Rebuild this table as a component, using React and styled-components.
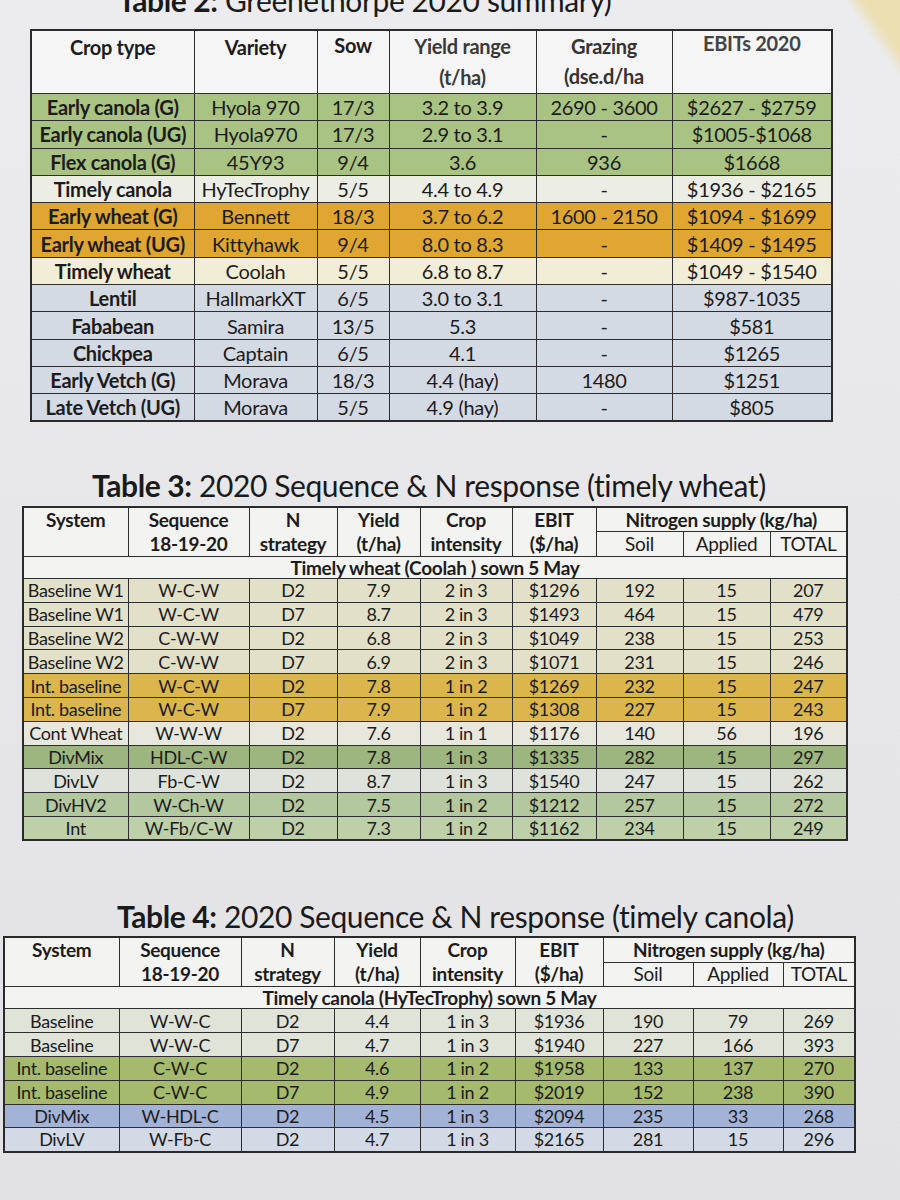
import React from "react";
import styled, { createGlobalStyle } from "styled-components";

const GlobalStyle = createGlobalStyle`
  html, body {
    margin: 0;
    padding: 0;
  }
  body {
    width: 900px;
    height: 1200px;
    overflow: hidden;
    font-family: Lato, "Open Sans", "Liberation Sans", sans-serif;
    color: #1c1c1c;
    background:
      linear-gradient(54deg, transparent calc(100% - 46px), #ecdfb2 calc(100% - 30px)),
      linear-gradient(180deg, #ececee 0%, #e7e7ea 45%, #e2e2e6 100%);
  }
`;

const Page = styled.div`
  display: flex;
  flex-direction: column;
  width: 900px;
`;

const Title = styled.h2`
  margin: ${(p) => p.$margin};
  padding-left: ${(p) => p.$indent}px;
  font-size: 30px;
  font-weight: 400;
  line-height: 34px;
  letter-spacing: -0.4px;
  color: #1a1a1a;
  white-space: nowrap;

  b {
    font-weight: 700;
  }
`;

const Table = styled.table`
  margin-left: ${(p) => p.$left}px;
  width: ${(p) => p.$width}px;
  border-collapse: collapse;
  table-layout: fixed;
  border: 2px solid #2a2a2a;
`;

const Row = styled.tr`
  height: ${(p) => p.$h}px;
  background: ${(p) => p.$bg || "#f4f4f3"};
`;

const Cell = styled.td`
  border: 1.5px solid #2d2d2d;
  padding: 0 1px;
  text-align: center;
  vertical-align: ${(p) => p.$valign || "middle"};
  font-size: ${(p) => p.$size || 18}px;
  font-weight: ${(p) => (p.$bold ? 700 : 400)};
  line-height: ${(p) => p.$lh || 20}px;
  white-space: nowrap;
  overflow: hidden;
  letter-spacing: -0.3px;
`;

const HeadCell = styled(Cell)`
  font-weight: 700;
  color: ${(p) => p.$color || "#1c1c1c"};
`;

// ---------- Table 2 ----------
const t2cols = [163, 123, 72, 147, 136, 160];

const T2 = {
  green: "#a9c382",
  white: "#eceee6",
  orange: "#dfa731",
  cream: "#f2eed6",
  blue: "#d4dae4",
};

const table2 = [
  ["Early canola (G)", "Hyola 970", "17/3", "3.2 to 3.9", "2690 - 3600", "$2627 - $2759", T2.green],
  ["Early canola (UG)", "Hyola970", "17/3", "2.9 to 3.1", "-", "$1005-$1068", T2.green],
  ["Flex canola (G)", "45Y93", "9/4", "3.6", "936", "$1668", T2.green],
  ["Timely canola", "HyTecTrophy", "5/5", "4.4 to 4.9", "-", "$1936 - $2165", T2.white],
  ["Early wheat (G)", "Bennett", "18/3", "3.7 to 6.2", "1600 - 2150", "$1094 - $1699", T2.orange],
  ["Early wheat (UG)", "Kittyhawk", "9/4", "8.0 to 8.3", "-", "$1409 - $1495", T2.orange],
  ["Timely wheat", "Coolah", "5/5", "6.8 to 8.7", "-", "$1049 - $1540", T2.cream],
  ["Lentil", "HallmarkXT", "6/5", "3.0 to 3.1", "-", "$987-1035", T2.blue],
  ["Fababean", "Samira", "13/5", "5.3", "-", "$581", T2.blue],
  ["Chickpea", "Captain", "6/5", "4.1", "-", "$1265", T2.blue],
  ["Early Vetch (G)", "Morava", "18/3", "4.4 (hay)", "1480", "$1251", T2.blue],
  ["Late Vetch (UG)", "Morava", "5/5", "4.9 (hay)", "-", "$805", T2.blue],
];

function SummaryTable() {
  return (
    <Table $left={30} $width={803}>
      <colgroup>
        {t2cols.map((w, i) => (
          <col key={i} style={{ width: w }} />
        ))}
      </colgroup>
      <tbody>
        <Row $h={59} $bg="#f5f5f5">
          <HeadCell $valign="top" $lh={32} $size={20}>Crop type</HeadCell>
          <HeadCell $valign="top" $lh={32} $size={20}>Variety</HeadCell>
          <HeadCell $valign="top" $lh={28} $size={20}>Sow</HeadCell>
          <HeadCell $valign="top" $lh={31} $size={20} $color="#3a3a3a">
            Yield range
            <br />
            (t/ha)
          </HeadCell>
          <HeadCell $valign="top" $lh={30} $size={20} $color="#333">
            Grazing
            <br />
            (dse.d/ha
          </HeadCell>
          <HeadCell $valign="top" $lh={24} $size={20} $color="#444">EBITs 2020</HeadCell>
        </Row>
        {table2.map((r) => (
          <Row key={r[0]} $h={27.3} $bg={r[6]}>
            <Cell $bold $size={20}>{r[0]}</Cell>
            {r.slice(1, 6).map((v, i) => (
              <Cell key={i} $size={20}>{v}</Cell>
            ))}
          </Row>
        ))}
      </tbody>
    </Table>
  );
}

// ---------- Tables 3 & 4 ----------
function SequenceTable({ left, width, cols, subtitle, rows, headH, rowH }) {
  return (
    <Table $left={left} $width={width}>
      <colgroup>
        {cols.map((w, i) => (
          <col key={i} style={{ width: w }} />
        ))}
      </colgroup>
      <tbody>
        <Row $h={headH} $bg="#f3f3f2">
          <HeadCell rowSpan={2} $valign="top" $lh={24} $size={19}>System</HeadCell>
          <HeadCell rowSpan={2} $valign="top" $lh={24} $size={19}>
            Sequence
            <br />
            18-19-20
          </HeadCell>
          <HeadCell rowSpan={2} $valign="top" $lh={24} $size={19}>
            N
            <br />
            strategy
          </HeadCell>
          <HeadCell rowSpan={2} $valign="top" $lh={24} $size={19}>
            Yield
            <br />
            (t/ha)
          </HeadCell>
          <HeadCell rowSpan={2} $valign="top" $lh={24} $size={19}>
            Crop
            <br />
            intensity
          </HeadCell>
          <HeadCell rowSpan={2} $valign="top" $lh={24} $size={19}>
            EBIT
            <br />
            ($/ha)
          </HeadCell>
          <HeadCell colSpan={3} $size={19}>Nitrogen supply (kg/ha)</HeadCell>
        </Row>
        <Row $h={headH} $bg="#f3f3f2">
          <Cell $size={19}>Soil</Cell>
          <Cell $size={19}>Applied</Cell>
          <Cell $size={19}>TOTAL</Cell>
        </Row>
        <Row $h={22} $bg="#f3f3f2">
          <HeadCell colSpan={9} $size={19}>{subtitle}</HeadCell>
        </Row>
        {rows.map((r, idx) => (
          <Row key={idx} $h={rowH} $bg={r[9]}>
            {r.slice(0, 9).map((v, i) => (
              <Cell key={i}>{v}</Cell>
            ))}
          </Row>
        ))}
      </tbody>
    </Table>
  );
}

const T3 = {
  base: "#e2e0c9",
  gold: "#dab64c",
  cont: "#e7e7de",
  green: "#9db67f",
  pale: "#dde3da",
  mid: "#b3c89e",
  light: "#bdd0a9",
};

const table3 = [
  ["Baseline W1", "W-C-W", "D2", "7.9", "2 in 3", "$1296", "192", "15", "207", T3.base],
  ["Baseline W1", "W-C-W", "D7", "8.7", "2 in 3", "$1493", "464", "15", "479", T3.base],
  ["Baseline W2", "C-W-W", "D2", "6.8", "2 in 3", "$1049", "238", "15", "253", T3.base],
  ["Baseline W2", "C-W-W", "D7", "6.9", "2 in 3", "$1071", "231", "15", "246", T3.base],
  ["Int. baseline", "W-C-W", "D2", "7.8", "1 in 2", "$1269", "232", "15", "247", T3.gold],
  ["Int. baseline", "W-C-W", "D7", "7.9", "1 in 2", "$1308", "227", "15", "243", T3.gold],
  ["Cont Wheat", "W-W-W", "D2", "7.6", "1 in 1", "$1176", "140", "56", "196", T3.cont],
  ["DivMix", "HDL-C-W", "D2", "7.8", "1 in 3", "$1335", "282", "15", "297", T3.green],
  ["DivLV", "Fb-C-W", "D2", "8.7", "1 in 3", "$1540", "247", "15", "262", T3.pale],
  ["DivHV2", "W-Ch-W", "D2", "7.5", "1 in 2", "$1212", "257", "15", "272", T3.mid],
  ["Int", "W-Fb/C-W", "D2", "7.3", "1 in 2", "$1162", "234", "15", "249", T3.light],
];

const T4 = {
  base: "#dfe3d8",
  olive: "#a5ba6c",
  blue: "#a3b3d7",
  pale: "#d3dae6",
};

const table4 = [
  ["Baseline", "W-W-C", "D2", "4.4", "1 in 3", "$1936", "190", "79", "269", T4.base],
  ["Baseline", "W-W-C", "D7", "4.7", "1 in 3", "$1940", "227", "166", "393", T4.base],
  ["Int. baseline", "C-W-C", "D2", "4.6", "1 in 2", "$1958", "133", "137", "270", T4.olive],
  ["Int. baseline", "C-W-C", "D7", "4.9", "1 in 2", "$2019", "152", "238", "390", T4.olive],
  ["DivMix", "W-HDL-C", "D2", "4.5", "1 in 3", "$2094", "235", "33", "268", T4.blue],
  ["DivLV", "W-Fb-C", "D2", "4.7", "1 in 3", "$2165", "281", "15", "296", T4.pale],
];

export default function App() {
  return (
    <>
      <GlobalStyle />
      <Page>
        <Title $indent={118} $margin="-17px 0 12px">
          <b>Table 2:</b> Greenethorpe 2020 summary)
        </Title>
        <SummaryTable />
        <Title $indent={92} $margin="46px 0 4px">
          <b>Table 3:</b> 2020 Sequence &amp; N response (timely wheat)
        </Title>
        <SequenceTable
          left={22}
          width={824}
          cols={[105, 121, 88, 83, 92, 84, 87, 87, 77]}
          subtitle="Timely wheat (Coolah ) sown 5 May"
          rows={table3}
          headH={24}
          rowH={23.8}
        />
        <Title $indent={117} $margin="58px 0 3px">
          <b>Table 4:</b> 2020 Sequence &amp; N response (timely canola)
        </Title>
        <SequenceTable
          left={3}
          width={851}
          cols={[115, 122, 93, 86, 95, 88, 90, 90, 72]}
          subtitle="Timely canola (HyTecTrophy) sown 5 May"
          rows={table4}
          headH={24}
          rowH={23.8}
        />
      </Page>
    </>
  );
}
